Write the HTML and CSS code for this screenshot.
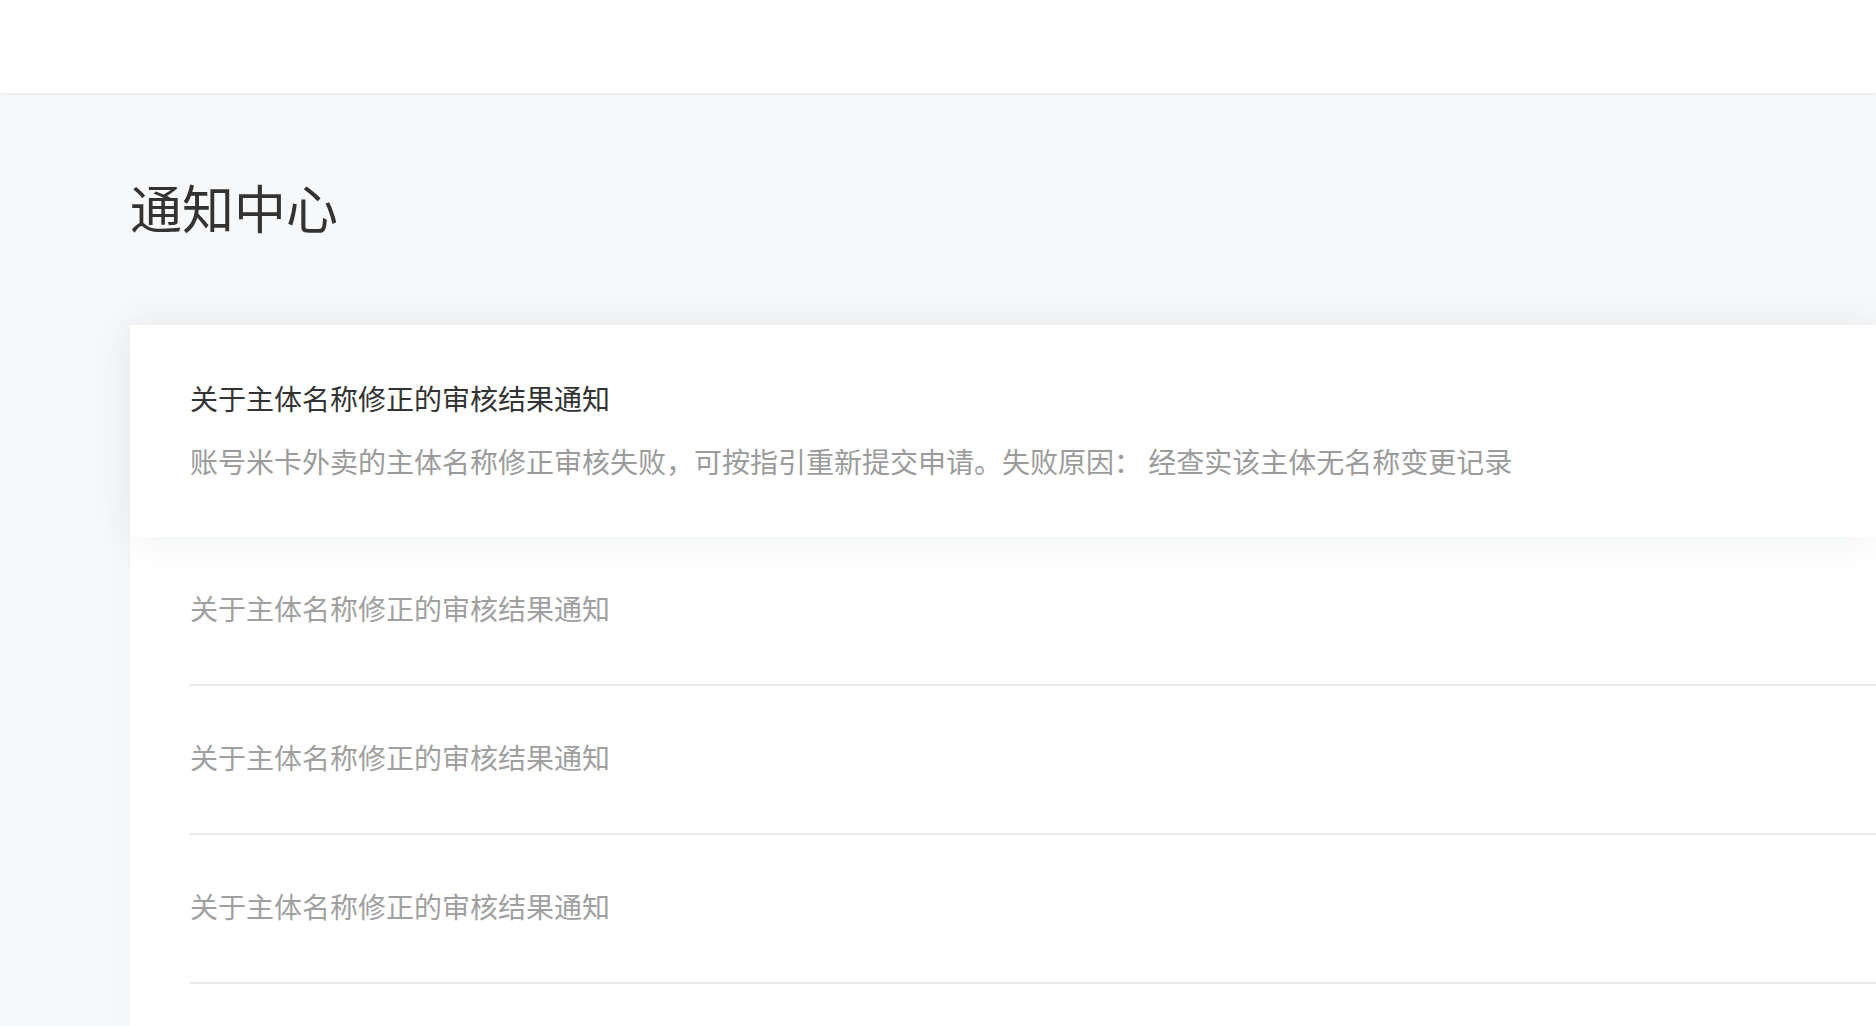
FILE: index.html
```html
<!DOCTYPE html>
<html lang="zh-CN">
<head>
<meta charset="utf-8">
<title>通知中心</title>
<link rel="stylesheet" href="styles.css">
</head>
<body>
<header class="topbar"></header>
<main class="main">
  <h1 class="page-title">通知中心</h1>
  <section class="notice-list">
    <div class="notice notice-active">
      <div class="notice-inner">
        <div class="notice-title">关于主体名称修正的审核结果通知</div>
        <div class="notice-desc">账号米卡外卖的主体名称修正审核失败，可按指引重新提交申请。失败原因： 经查实该主体无名称变更记录</div>
      </div>
    </div>
    <div class="notice">
      <div class="notice-inner">
        <div class="notice-title">关于主体名称修正的审核结果通知</div>
      </div>
    </div>
    <div class="notice">
      <div class="notice-inner">
        <div class="notice-title">关于主体名称修正的审核结果通知</div>
      </div>
    </div>
    <div class="notice">
      <div class="notice-inner">
        <div class="notice-title">关于主体名称修正的审核结果通知</div>
      </div>
    </div>
  </section>
</main>
</body>
</html>
```
FILE: styles.css
```css
html, body {
  margin: 0;
  padding: 0;
}
body {
  width: 1876px;
  height: 1026px;
  overflow: hidden;
  background: #f7f8fa;
  font-family: "Noto Sans CJK SC", "Noto Sans", sans-serif;
}
.topbar {
  height: 93px;
  background: #ffffff;
  box-shadow: 0 1px 3px rgba(0, 0, 0, 0.08);
  position: relative;
  z-index: 2;
}
.main {
  padding-left: 130px;
}
.page-title {
  margin: 0;
  padding-top: 78px;
  height: 72px;
  line-height: 72px;
  font-size: 52px;
  font-weight: 400;
  color: #333333;
}
.notice-list {
  margin-top: 82px;
  min-height: 720px;
  background: #ffffff;
  box-shadow: -6px 0 30px rgba(0, 0, 0, 0.02);
}
.notice {
  padding-left: 60px;
  background: #ffffff;
}
.notice-inner {
  padding: 51px 0 56px;
  border-bottom: 2px solid #e9e9e9;
}
.notice-active {
  position: relative;
  z-index: 1;
  box-shadow: 0 0 40px rgba(30, 40, 60, 0.07);
}
.notice-active .notice-inner {
  padding: 53px 0 56px;
  border-bottom: none;
}
.notice-title {
  font-size: 28px;
  line-height: 40px;
  color: #a0a0a0;
}
.notice-active .notice-title {
  color: #333333;
}
.notice-desc {
  margin-top: 23px;
  font-size: 28px;
  line-height: 40px;
  color: #9b9b9b;
  white-space: nowrap;
}
```
